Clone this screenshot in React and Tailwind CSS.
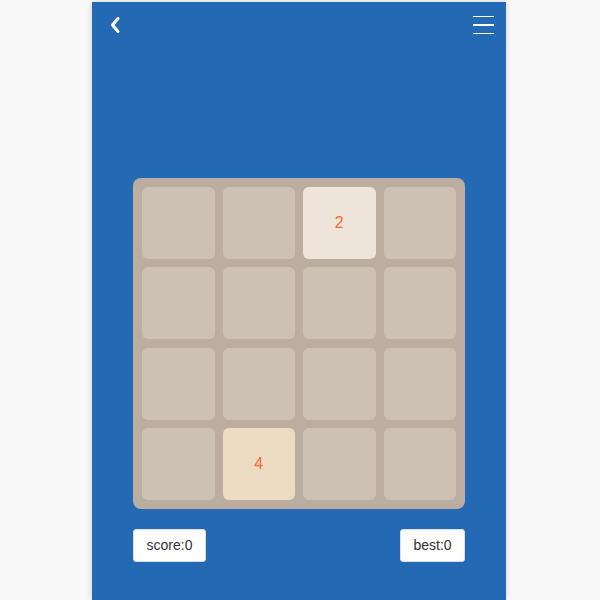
import React from 'react';

const cells = [0, 0, 2, 0, 0, 0, 0, 0, 0, 0, 0, 0, 0, 4, 0, 0];

function Tile({ value }) {
  let bg = 'bg-[#cdc1b4]';
  if (value === 2) bg = 'bg-[#eee4da]';
  if (value === 4) bg = 'bg-[#eddcc2]';
  return (
    <div className={`${bg} rounded-md flex items-center justify-center text-[16px] text-[#f86a35]`}>
      {value ? value : ''}
    </div>
  );
}

export default function App() {
  return (
    <div className="w-[600px] h-[600px] bg-[#f8f8f8] flex pl-[92px] pt-[2px] overflow-hidden" style={{ fontFamily: '"Liberation Sans", Arial, sans-serif' }}>
      <div className="w-[414px] h-[598px] bg-[#2469b3] shadow-[0_0_6px_rgba(0,0,0,0.15)] flex flex-col">
        {/* header */}
        <div className="flex items-center justify-between h-[44px] pl-[17px] pr-[12px]">
          <svg width="12" height="18" viewBox="0 0 12 18" className="mt-[2px]">
            <path d="M9 2.5 L3.5 9 L9 15.5" stroke="#fff" strokeWidth="3" fill="none" strokeLinecap="round" strokeLinejoin="round" />
          </svg>
          <div className="flex flex-col gap-[7px] w-[21px] mt-[2px]">
            <div className="h-[1.5px] bg-white" />
            <div className="h-[1.5px] bg-white" />
            <div className="h-[1.5px] bg-white" />
          </div>
        </div>

        {/* board */}
        <div className="mt-[132px] mx-auto w-[332px] h-[331px] bg-[#bbada0] rounded-lg p-[9px] grid grid-cols-4 grid-rows-4 gap-x-2 gap-y-[8.5px]">
          {cells.map((v, i) => (
            <Tile key={i} value={v} />
          ))}
        </div>

        {/* scores */}
        <div className="mx-auto w-[332px] flex justify-between mt-[20px]">
          <div className="h-[33px] w-[73px] justify-center bg-white rounded-[3px] border border-[#ddd] flex items-center text-[14px] text-[#333]">score:0</div>
          <div className="h-[33px] w-[65px] justify-center bg-white rounded-[3px] border border-[#ddd] flex items-center text-[14px] text-[#333]">best:0</div>
        </div>
      </div>
    </div>
  );
}
